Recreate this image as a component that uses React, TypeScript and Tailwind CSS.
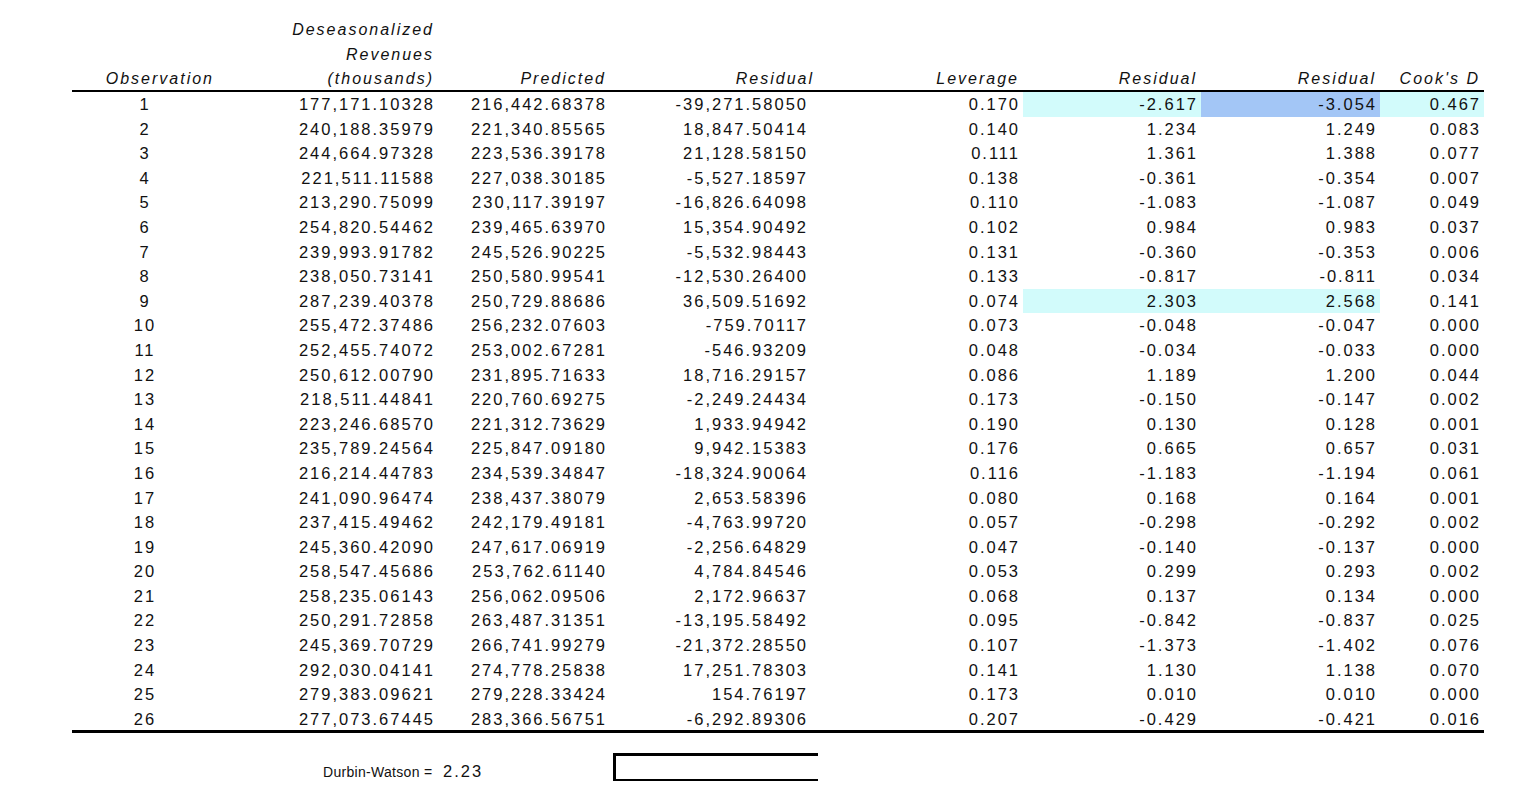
const rows: string[][] = [
  ["1", "177,171.10328", "216,442.68378", "-39,271.58050", "0.170", "-2.617", "-3.054", "0.467"],
  ["2", "240,188.35979", "221,340.85565", "18,847.50414", "0.140", "1.234", "1.249", "0.083"],
  ["3", "244,664.97328", "223,536.39178", "21,128.58150", "0.111", "1.361", "1.388", "0.077"],
  ["4", "221,511.11588", "227,038.30185", "-5,527.18597", "0.138", "-0.361", "-0.354", "0.007"],
  ["5", "213,290.75099", "230,117.39197", "-16,826.64098", "0.110", "-1.083", "-1.087", "0.049"],
  ["6", "254,820.54462", "239,465.63970", "15,354.90492", "0.102", "0.984", "0.983", "0.037"],
  ["7", "239,993.91782", "245,526.90225", "-5,532.98443", "0.131", "-0.360", "-0.353", "0.006"],
  ["8", "238,050.73141", "250,580.99541", "-12,530.26400", "0.133", "-0.817", "-0.811", "0.034"],
  ["9", "287,239.40378", "250,729.88686", "36,509.51692", "0.074", "2.303", "2.568", "0.141"],
  ["10", "255,472.37486", "256,232.07603", "-759.70117", "0.073", "-0.048", "-0.047", "0.000"],
  ["11", "252,455.74072", "253,002.67281", "-546.93209", "0.048", "-0.034", "-0.033", "0.000"],
  ["12", "250,612.00790", "231,895.71633", "18,716.29157", "0.086", "1.189", "1.200", "0.044"],
  ["13", "218,511.44841", "220,760.69275", "-2,249.24434", "0.173", "-0.150", "-0.147", "0.002"],
  ["14", "223,246.68570", "221,312.73629", "1,933.94942", "0.190", "0.130", "0.128", "0.001"],
  ["15", "235,789.24564", "225,847.09180", "9,942.15383", "0.176", "0.665", "0.657", "0.031"],
  ["16", "216,214.44783", "234,539.34847", "-18,324.90064", "0.116", "-1.183", "-1.194", "0.061"],
  ["17", "241,090.96474", "238,437.38079", "2,653.58396", "0.080", "0.168", "0.164", "0.001"],
  ["18", "237,415.49462", "242,179.49181", "-4,763.99720", "0.057", "-0.298", "-0.292", "0.002"],
  ["19", "245,360.42090", "247,617.06919", "-2,256.64829", "0.047", "-0.140", "-0.137", "0.000"],
  ["20", "258,547.45686", "253,762.61140", "4,784.84546", "0.053", "0.299", "0.293", "0.002"],
  ["21", "258,235.06143", "256,062.09506", "2,172.96637", "0.068", "0.137", "0.134", "0.000"],
  ["22", "250,291.72858", "263,487.31351", "-13,195.58492", "0.095", "-0.842", "-0.837", "0.025"],
  ["23", "245,369.70729", "266,741.99279", "-21,372.28550", "0.107", "-1.373", "-1.402", "0.076"],
  ["24", "292,030.04141", "274,778.25838", "17,251.78303", "0.141", "1.130", "1.138", "0.070"],
  ["25", "279,383.09621", "279,228.33424", "154.76197", "0.173", "0.010", "0.010", "0.000"],
  ["26", "277,073.67445", "283,366.56751", "-6,292.89306", "0.207", "-0.429", "-0.421", "0.016"],
];

// cell fills, keyed by "row-col"
const fills: Record<string, string> = {
  "0-5": "bg-[#d2fbfb]",
  "0-6": "bg-[#a3c6f6]",
  "0-7": "bg-[#d2fbfb]",
  "8-5": "bg-[#d2fbfb]",
  "8-6": "bg-[#d2fbfb]",
};

const grid =
  "grid grid-cols-[146px_220px_172px_208px_205px_178px_179px_104px]";

const headers = ["Predicted", "Residual", "Leverage", "Residual", "Residual", "Cook's D"];

const cellPad = (ci: number) => {
  if (ci === 0) return "text-center";
  if (ci === 3) return "pr-[10px] text-right";
  return "pr-[3px] text-right";
};

export default function App() {
  return (
    <div className="min-h-[786px] bg-white pl-[72px] pt-[18px] font-['Liberation_Sans',Arial,sans-serif] text-[16.5px] tracking-[2px] text-[#111]">
      <div className="w-[1412px]">
        <div className={`${grid} h-[74px] items-end border-b-2 border-black text-[16px] italic leading-[24.5px] tracking-[2px]`}>
          <div className="pr-[4px] text-right">Observation</div>
          <div className="pr-[4px] text-right">
            <div>Deseasonalized</div>
            <div>Revenues</div>
            <div>(thousands)</div>
          </div>
          {headers.map((h, i) => (
            <div key={i} className="pr-[4px] text-right">
              {h}
            </div>
          ))}
        </div>
        <div className="border-b-[3px] border-black">
          {rows.map((r, ri) => (
            <div
              key={ri}
              className={`${grid} ${ri === rows.length - 1 ? "h-[23.5px]" : "h-[24.6px]"} leading-[24.6px]`}
            >
              {r.map((v, ci) => (
                <div key={ci} className={`${cellPad(ci)} ${fills[`${ri}-${ci}`] ?? ""}`}>
                  {v}
                </div>
              ))}
            </div>
          ))}
        </div>
      </div>
      <div className="mt-[20px] flex items-start">
        <span className="ml-[251px] mt-[10px] w-[120px] text-[14px] leading-[18px] tracking-[0.3px]">
          Durbin-Watson =
        </span>
        <span className="mt-[8px] w-[170px] leading-[20px]">2.23</span>
        <div className="h-[28px] w-[205px] border-b-2 border-l-[3px] border-t-[3px] border-black" />
      </div>
    </div>
  );
}
